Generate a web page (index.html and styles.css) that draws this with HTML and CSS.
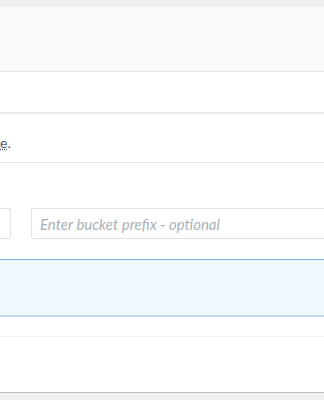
FILE: index.html
```html
<!DOCTYPE html>
<html lang="en">
<head>
    <meta charset="UTF-8">
    <meta name="viewport" content="width=device-width, initial-scale=1.0">
    <title>Bucket prefix</title>
    <link rel="stylesheet" href="styles.css">
</head>
<body>
    <div class="topbar"></div>
    <div class="header"></div>
    <div class="section"></div>

    <div class="desc">
        <p class="desc-text"><a href="#">e</a>.</p>
    </div>

    <div class="form-row">
        <input type="text" class="field field-bucket">
        <input type="text" class="field field-prefix" placeholder="Enter bucket prefix - optional">
    </div>

    <div class="info"></div>

    <div class="row"></div>
    <div class="footer-space"></div>
    <div class="footer"></div>
</body>
</html>
```

FILE: styles.css
```css
body {
    margin: 0;
    background-color: #fff;
    font-family: Lato, "Open Sans", sans-serif;
    overflow: hidden;
}
.topbar {
    height: 7px;
    background-color: #eff1f0;
}
.header {
    height: 64px;
    background-color: #f9f9f9;
    border-bottom: 1px solid #e4e5e5;
}
.section {
    height: 40px;
    border-bottom: 2px solid #e8e8e8;
}
.desc {
    height: 48px;
    border-bottom: 1px solid #dfe6e6;
}
.desc-text {
    margin: 0;
    padding-top: 21px;
    font-size: 14px;
    color: #545b64;
    line-height: 16px;
}
.desc-text a {
    color: #545b64;
    text-decoration: underline dotted;
}
.form-row {
    display: flex;
    gap: 20px;
    margin-left: -89px;
    padding: 45px 0 20px;
    overflow: hidden;
}
.field {
    height: 31px;
    box-sizing: border-box;
    border: 1px solid #dfe3e3;
    border-radius: 2px;
    padding: 0 8px;
    font-family: Lato, "Open Sans", sans-serif;
    font-size: 15px;
    background: #fff;
}
.field-bucket {
    width: 100px;
    flex: none;
}
.field-prefix {
    flex: none;
    width: 340px;
}
.field-prefix::placeholder {
    color: #a9b1b5;
    font-style: italic;
}
.info {
    height: 55px;
    background-color: #f0f8fe;
    border-top: 1px solid #7fabd3;
    border-bottom: 2px solid #c0dbeb;
}
.row {
    height: 19px;
    border-bottom: 1px solid #f3f3f3;
}
.footer-space {
    height: 55px;
}
.footer {
    height: 7px;
    border-top: 1px solid #b9bdbf;
    background-color: #f0f0f0;
}
```
